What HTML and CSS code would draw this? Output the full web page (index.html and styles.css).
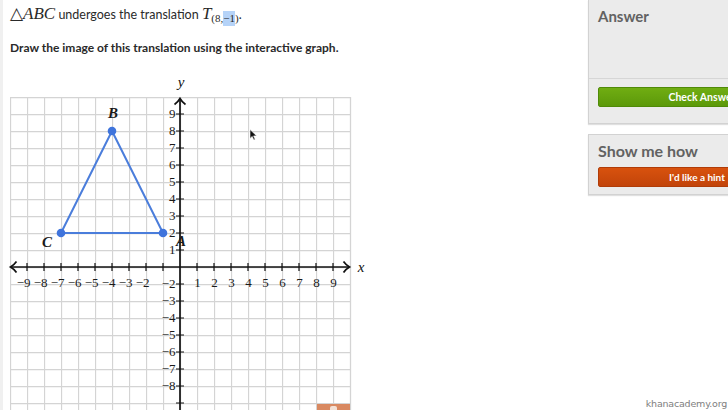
FILE: index.html
```html
<!DOCTYPE html>
<html>
<head>
<meta charset="utf-8">
<link rel="stylesheet" href="styles.css">
</head>
<body>
<div class="page">
  <div class="main">
    <p class="q1"><span class="math">△<i>ABC</i></span> undergoes the translation <span class="math"><i>T</i><sub class="sub">(8,<span class="sel">−1</span>)</sub></span>.</p>
    <p class="q2">Draw the image of this translation using the interactive graph.</p>
    <svg class="graph" width="370" height="340" viewBox="0 70 370 340">
      <defs>
        <pattern id="grid" patternUnits="userSpaceOnUse" x="10" y="97" width="17" height="17">
          <path d="M0.5 0V17M0 0.5H17" stroke="#d4d4d4" stroke-width="1.3" fill="none"/>
        </pattern>
      </defs>
      <rect x="10" y="97" width="341" height="320" fill="url(#grid)"/>
      <path d="M350.5 97V410" stroke="#d4d4d4" stroke-width="1.3"/>
      <g stroke="#111" stroke-width="1.7" fill="none">
        <path d="M11 267H349"/>
        <path d="M180 100V410"/>
        <path d="M343.5 261.5Q346 265 349.5 267Q346 269 343.5 272.5"/>
        <path d="M16.5 261.5Q14 265 10.5 267Q14 269 16.5 272.5"/>
        <path d="M174.5 104.5Q178 102 180 98.5Q182 102 185.5 104.5"/>
        <path d="M27 263v8M44 263v8M61 263v8M78 263v8M95 263v8M112 263v8M129 263v8M146 263v8M163 263v8M197 263v8M214 263v8M231 263v8M248 263v8M265 263v8M282 263v8M299 263v8M316 263v8M333 263v8" stroke-width="1.2"/>
        <path d="M176 114h8M176 131h8M176 148h8M176 165h8M176 182h8M176 199h8M176 216h8M176 233h8M176 250h8M176 284h8M176 301h8M176 318h8M176 335h8M176 352h8M176 369h8M176 386h8M176 403h8" stroke-width="1.2"/>
      </g>
      <g class="lbl" text-anchor="end">
        <text x="175.5" y="118">9</text>
        <text x="175.5" y="135">8</text>
        <text x="175.5" y="152">7</text>
        <text x="175.5" y="169">6</text>
        <text x="175.5" y="186">5</text>
        <text x="175.5" y="203">4</text>
        <text x="175.5" y="220">3</text>
        <text x="175.5" y="237">2</text>
        <text x="175.5" y="254">1</text>
        <text x="175.5" y="288">−2</text>
        <text x="175.5" y="305">−3</text>
        <text x="175.5" y="322">−4</text>
        <text x="175.5" y="339">−5</text>
        <text x="175.5" y="356">−6</text>
        <text x="175.5" y="373">−7</text>
        <text x="175.5" y="390">−8</text>
        <text x="30.5" y="287">−9</text>
        <text x="47.5" y="287">−8</text>
        <text x="64.5" y="287">−7</text>
        <text x="81.5" y="287">−6</text>
        <text x="98.5" y="287">−5</text>
        <text x="115.5" y="287">−4</text>
        <text x="132.5" y="287">−3</text>
        <text x="149.5" y="287">−2</text>
      </g>
      <g class="lbl" text-anchor="middle">
        <text x="197.5" y="287">1</text>
        <text x="214.5" y="287">2</text>
        <text x="231.5" y="287">3</text>
        <text x="248.5" y="287">4</text>
        <text x="265.5" y="287">5</text>
        <text x="282.5" y="287">6</text>
        <text x="299.5" y="287">7</text>
        <text x="316.5" y="287">8</text>
        <text x="333.5" y="287">9</text>
      </g>
      <text class="var" x="361" y="272" text-anchor="middle">x</text>
      <text class="var" x="181" y="87" text-anchor="middle">y</text>
      <polygon points="112,131 163,233 61,233" fill="none" stroke="#4a7ddb" stroke-width="2" stroke-linejoin="round"/>
      <g fill="#3f74dc">
        <circle cx="112" cy="131" r="4.3"/>
        <circle cx="163" cy="233" r="4.3"/>
        <circle cx="61" cy="233" r="4.3"/>
      </g>
      <text class="pt" x="113" y="118" text-anchor="middle">B</text>
      <text class="pt" x="47" y="247" text-anchor="middle">C</text>
      <text class="pt" x="181" y="246" text-anchor="middle">A</text>
      <path d="M250 129.5L250 138.5L252.2 136.4L253.8 140L255.2 139.4L253.6 135.9L256.6 135.9Z" fill="#111" stroke="#fff" stroke-width="0.6"/>
      <rect x="317" y="404" width="33" height="8" fill="#d98961"/>
      <rect x="330" y="406" width="7" height="6" rx="2" fill="#f3e1d6"/>
    </svg>
  </div>
  <div class="sidebar">
    <div class="panel answer">
      <div class="panel-head">Answer</div>
      <div class="panel-body">
        <div class="btn btn-green">Check Answer</div>
      </div>
    </div>
    <div class="panel hint">
      <div class="panel-title">Show me how</div>
      <div class="btn btn-orange">I'd like a hint</div>
    </div>
  </div>
</div>
<div class="watermark">khanacademy.org</div>
</body>
</html>
```

FILE: styles.css
```css
html, body {
  margin: 0;
  padding: 0;
}
body {
  width: 728px;
  height: 410px;
  overflow: hidden;
  background: #fff;
  font-family: Lato, "Open Sans", sans-serif;
  color: #222;
  position: relative;
}
.page {
  display: flex;
  height: 410px;
}
.main {
  width: 588px;
  flex: none;
  box-shadow: inset 3px 0 0 #f0f0f0;
}
.q1 {
  margin: 0;
  height: 35px;
  padding: 3px 0 0 10px;
  box-sizing: border-box;
  font-size: 12.5px;
  line-height: 22px;
  color: #2a2a2a;
}
.math {
  font-family: "Liberation Serif", "DejaVu Serif", serif;
  font-size: 17px;
}
.math i {
  font-style: italic;
}
.sub {
  font-size: 11px;
  font-style: normal;
  vertical-align: -3px;
  line-height: 0;
}
.sel {
  background: #b5d3f8;
  padding: 1px 0 2px;
}
.q2 {
  margin: 0;
  height: 35px;
  padding: 5px 0 0 10px;
  box-sizing: border-box;
  font-size: 12px;
  line-height: 16px;
  font-weight: 700;
  color: #2a2a2a;
}
.graph {
  display: block;
}
.lbl text {
  font-family: "Liberation Serif", "DejaVu Serif", serif;
  font-size: 13px;
  fill: #1a1a1a;
}
.var {
  font-family: "Liberation Serif", "DejaVu Serif", serif;
  font-style: italic;
  font-size: 15px;
  fill: #111;
}
.pt {
  font-family: "Liberation Serif", "DejaVu Serif", serif;
  font-style: italic;
  font-weight: 700;
  font-size: 15px;
  fill: #1a1a1a;
}
.sidebar {
  width: 220px;
  flex: none;
}
.panel {
  background: #ebebeb;
  border: 1px solid #d2d2d2;
  box-shadow: 0 1px 1px rgba(0, 0, 0, 0.12);
  box-sizing: border-box;
}
.answer {
  height: 124px;
  border-top: none;
}
.panel-head {
  height: 79px;
  box-sizing: border-box;
  border-bottom: 1px solid #d6d6d6;
  padding: 6px 0 0 9px;
  font-size: 15px;
  font-weight: 700;
  color: #626262;
  line-height: 20px;
}
.panel-body {
  padding: 8px 0 0 9px;
}
.btn {
  width: 208px;
  height: 20px;
  box-sizing: border-box;
  border-radius: 2px;
  color: #fff;
  font-size: 10.5px;
  font-weight: 700;
  line-height: 18px;
  text-align: center;
  white-space: nowrap;
}
.btn-green {
  background: linear-gradient(#70ad12, #5c990a);
  border: 1px solid #4f8a07;
}
.hint {
  margin-top: 10px;
  height: 61px;
  padding: 6px 0 0 9px;
}
.panel-title {
  font-size: 16px;
  font-weight: 700;
  color: #626262;
  line-height: 20px;
  height: 26px;
}
.btn-orange {
  width: 198px;
  font-size: 10px;
  background: linear-gradient(#d8520e, #c2440a);
  border: 1px solid #b03c08;
}
.watermark {
  position: absolute;
  right: 1px;
  bottom: 1px;
  font-family: "DejaVu Sans", sans-serif;
  font-size: 9.5px;
  color: #7e7e7e;
  text-shadow: 0 0 1px #fff, 0 0 2px #fff;
  letter-spacing: -0.2px;
}
```
